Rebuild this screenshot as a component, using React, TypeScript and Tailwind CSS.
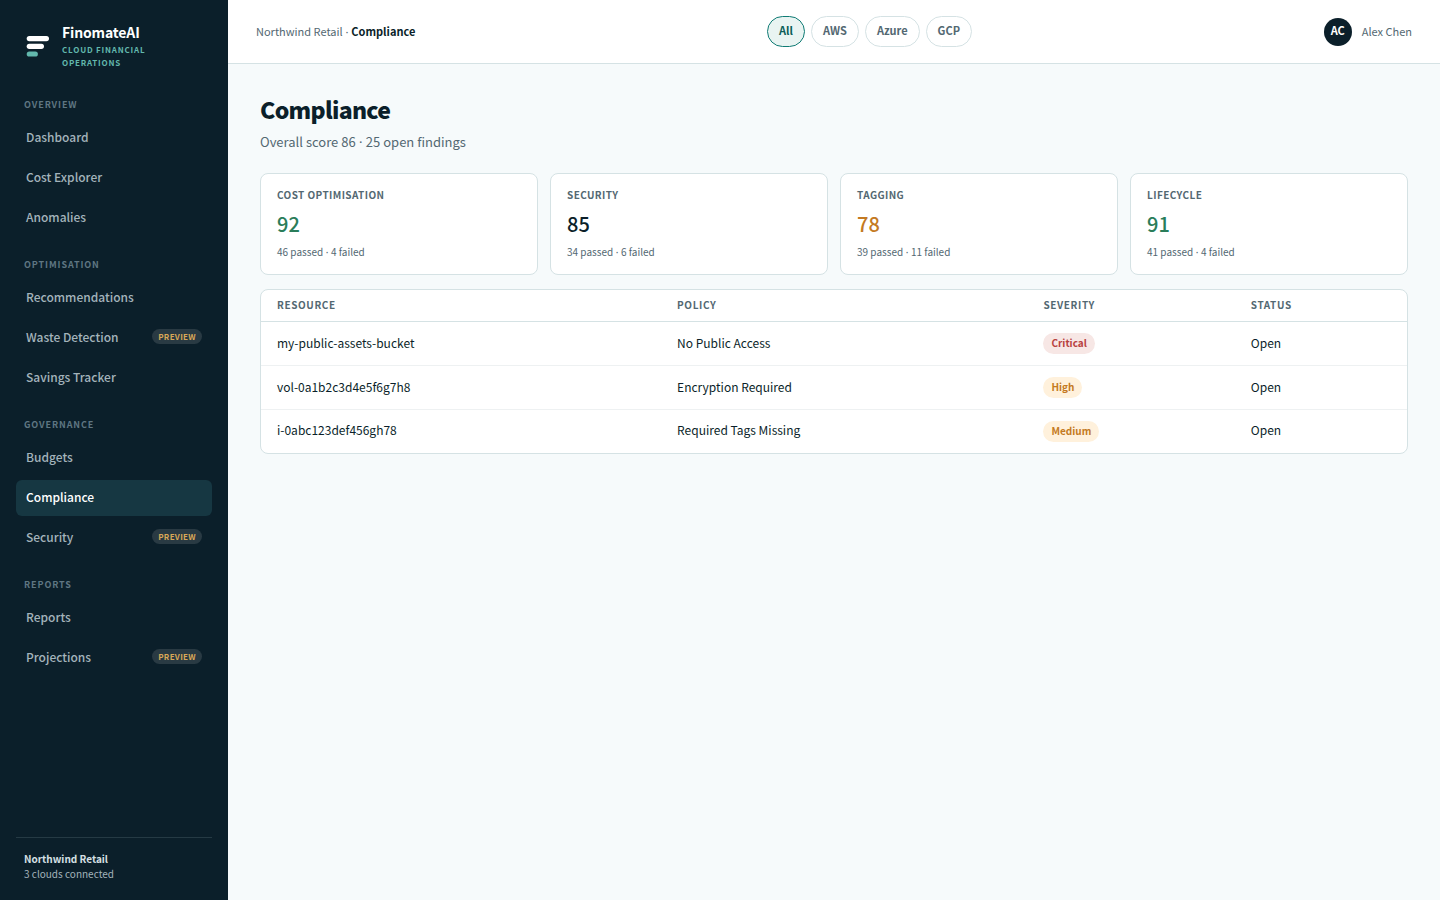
import { clsx } from "clsx";

type NavItem = { label: string; preview?: boolean };

const NAV_SECTIONS: { title: string; items: NavItem[] }[] = [
  {
    title: "Overview",
    items: [{ label: "Dashboard" }, { label: "Cost Explorer" }, { label: "Anomalies" }],
  },
  {
    title: "Optimisation",
    items: [
      { label: "Recommendations" },
      { label: "Waste Detection", preview: true },
      { label: "Savings Tracker" },
    ],
  },
  {
    title: "Governance",
    items: [{ label: "Budgets" }, { label: "Compliance" }, { label: "Security", preview: true }],
  },
  {
    title: "Reports",
    items: [{ label: "Reports" }, { label: "Projections", preview: true }],
  },
];

const CLOUDS = ["All", "AWS", "Azure", "GCP"];

const SCORES = [
  { label: "Cost optimisation", score: 92, passed: 46, failed: 4 },
  { label: "Security", score: 85, passed: 34, failed: 6 },
  { label: "Tagging", score: 78, passed: 39, failed: 11 },
  { label: "Lifecycle", score: 91, passed: 41, failed: 4 },
];

const FINDINGS = [
  { resource: "my-public-assets-bucket", policy: "No Public Access", severity: "Critical", status: "Open" },
  { resource: "vol-0a1b2c3d4e5f6g7h8", policy: "Encryption Required", severity: "High", status: "Open" },
  { resource: "i-0abc123def456gh78", policy: "Required Tags Missing", severity: "Medium", status: "Open" },
];

function scoreColor(score: number) {
  if (score >= 90) return "text-[#2a7d5a]";
  if (score >= 80) return "text-[#0b1f2a]";
  return "text-[#c47a22]";
}

// The CJK face draws a full-width middle dot, so take it from a Latin one
function Dot() {
  return <span className="font-['Noto_Sans',sans-serif] leading-none"> · </span>;
}

function Logo() {
  return (
    <svg viewBox="0 0 28 28" className="size-7 shrink-0" aria-hidden="true">
      <rect x="2.7" y="4" width="22.3" height="5.2" rx="2.6" fill="#fff" />
      <rect x="2.7" y="11.7" width="17.3" height="5.2" rx="2.6" fill="#fff" />
      <rect x="2.7" y="19.4" width="11.2" height="5.2" rx="2.6" fill="#62b8ad" />
    </svg>
  );
}

function Sidebar() {
  return (
    <aside className="flex w-57 shrink-0 flex-col bg-[#0b1f2a] px-4 pt-[23px] pb-[19px]">
      <div className="flex items-center gap-2.5 px-2">
        <Logo />
        <div>
          <div className="text-sm leading-[18px] font-bold tracking-[-0.01em] text-white">FinomateAI</div>
          <div className="mt-0.5 text-[8px] leading-[13px] font-bold tracking-[0.1em] text-[#62b8ad] uppercase">
            Cloud financial operations
          </div>
        </div>
      </div>

      <nav className="mt-7 flex flex-col">
        {NAV_SECTIONS.map((section) => (
          <div key={section.title} className="mb-[21px]">
            <h2 className="mb-[7px] px-2 text-[9px] leading-4 font-bold tracking-[0.1em] text-[#5f7682] uppercase">
              {section.title}
            </h2>
            <div className="flex flex-col gap-1">
              {section.items.map((item) => {
                const active = item.label === "Compliance";
                return (
                  <a
                    key={item.label}
                    href="#"
                    className={clsx(
                      "flex h-9 items-center justify-between rounded-md px-2.5 pb-0.5 text-xs leading-5 font-medium",
                      active ? "bg-[#163742] text-white" : "text-[#a3b3bb]"
                    )}
                  >
                    {item.label}
                    {item.preview && (
                      <span className="mb-px rounded-full bg-[#293a43] px-1.5 text-[8px] leading-[15px] font-bold tracking-[0.04em] text-[#d9a857] uppercase">
                        Preview
                      </span>
                    )}
                  </a>
                );
              })}
            </div>
          </div>
        ))}
      </nav>

      <div className="mt-auto border-t border-[#253a44] px-2 pt-[13px] text-[10px] leading-[15px] text-[#a3b3bb]">
        <div className="font-bold text-[#d6e0e4]">Northwind Retail</div>
        3 clouds connected
      </div>
    </aside>
  );
}

function TopBar() {
  return (
    <header className="flex h-16 items-center justify-between border-b border-[#d5e2e4] bg-white px-7">
      <div className="pb-0.5 text-[11px] leading-4 text-[#536872]">
        Northwind Retail
        <Dot />
        <strong className="font-bold text-[#0b1f2a]">Compliance</strong>
      </div>
      <div className="flex gap-1.5">
        {CLOUDS.map((cloud) => (
          <button
            key={cloud}
            type="button"
            className={clsx(
              "rounded-full border px-[11px] pt-[5px] pb-[7px] text-[11px] leading-[17px] font-bold",
              cloud === "All"
                ? "border-[#0f7b74] bg-[#e9f4f2] text-[#0b5e59]"
                : "border-[#d5e2e4] bg-white text-[#536872]"
            )}
          >
            {cloud}
          </button>
        ))}
      </div>
      <div className="flex items-center gap-2.5">
        <span className="flex size-7 items-center justify-center rounded-full bg-[#0b1f2a] pb-0.5 text-[11px] font-bold text-white">
          AC
        </span>
        <span className="pb-0.5 text-[11px] leading-4 text-[#536872]">Alex Chen</span>
      </div>
    </header>
  );
}

function SeverityBadge({ severity }: { severity: string }) {
  return (
    <span
      className={clsx(
        "inline-block rounded-full px-2 pb-px text-[10px] leading-5 font-bold",
        severity === "Critical" ? "bg-[#f7e7e5] text-[#b9423f]" : "bg-[#fff1dc] text-[#c47a22]"
      )}
    >
      {severity}
    </span>
  );
}

export default function App() {
  return (
    <div className="flex min-h-screen bg-[#f6fafb] font-['Noto_Sans_CJK_SC',sans-serif] text-[#0b1f2a]">
      <Sidebar />
      <div className="min-w-0 flex-1">
        <TopBar />
        <main className="px-8 pt-[27px]">
          <h1 className="text-[23px] leading-9 font-extrabold tracking-[-0.03em]">Compliance</h1>
          <p className="mt-[5px] text-[13px] leading-5 text-[#536872]">
            Overall score 86
            <Dot />
            25 open findings
          </p>

          <div className="mt-[21px] grid grid-cols-4 gap-3">
            {SCORES.map((card) => (
              <section key={card.label} className="rounded-lg border border-[#d5e2e4] bg-white px-4 pt-[13px] pb-3.5">
                <h2 className="text-[10px] leading-4 font-bold tracking-[0.04em] text-[#536872] uppercase">
                  {card.label}
                </h2>
                <div className={clsx("mt-[5px] text-xl leading-8 font-medium", scoreColor(card.score))}>
                  {card.score}
                </div>
                <div className="mt-1 text-[10px] leading-4 text-[#536872]">
                  {card.passed} passed
                  <Dot />
                  {card.failed} failed
                </div>
              </section>
            ))}
          </div>

          <div className="mt-3.5 overflow-hidden rounded-lg border border-[#d5e2e4] bg-white">
            <table className="w-full text-left text-xs">
              <thead>
                <tr className="border-b border-[#d5e2e4] text-[10px] leading-4 tracking-[0.06em] text-[#536872] uppercase">
                  <th className="px-4 pt-[7px] pb-2 font-bold">Resource</th>
                  <th className="px-4 pt-[7px] pb-2 font-bold">Policy</th>
                  <th className="px-4 pt-[7px] pb-2 font-bold">Severity</th>
                  <th className="px-4 pt-[7px] pb-2 font-bold">Status</th>
                </tr>
              </thead>
              <tbody>
                {FINDINGS.map((finding) => (
                  <tr
                    key={finding.resource}
                    className="h-11 border-b border-[#eef1f2] last:h-[43px] last:border-b-0"
                  >
                    <td className="px-4 pb-0.5">{finding.resource}</td>
                    <td className="px-4 pb-0.5">{finding.policy}</td>
                    <td className="px-4">
                      <SeverityBadge severity={finding.severity} />
                    </td>
                    <td className="px-4 pb-0.5">{finding.status}</td>
                  </tr>
                ))}
              </tbody>
            </table>
          </div>
        </main>
      </div>
    </div>
  );
}
